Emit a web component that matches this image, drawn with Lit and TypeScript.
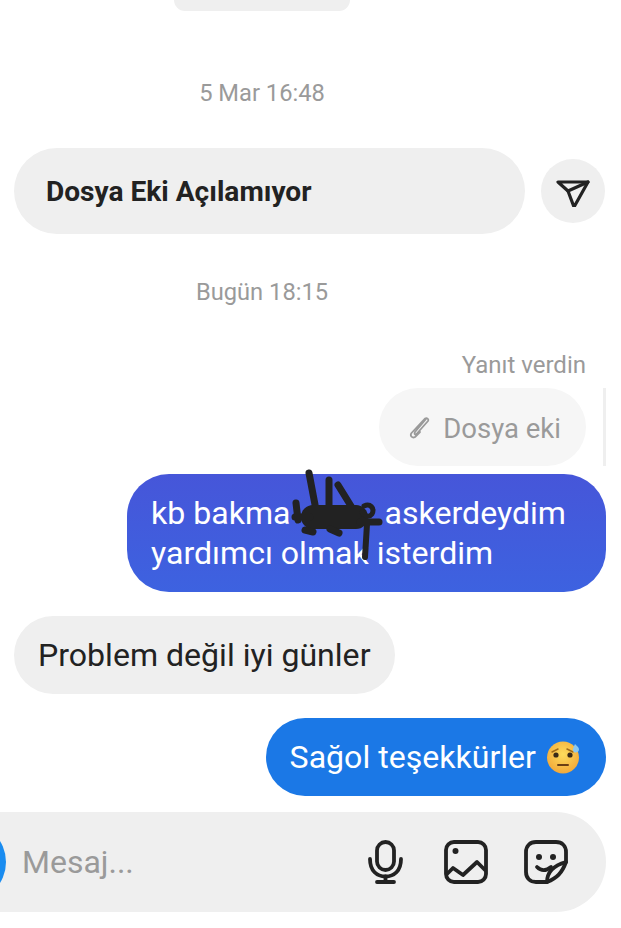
import { LitElement, html, css, svg } from "lit";
import { customElement } from "lit/decorators.js";

@customElement("app-root")
export class AppRoot extends LitElement {
  static styles = css`
    :host { display: block; width: 621px; height: 928px; overflow: hidden; background: #fff; font-family: Roboto, "Liberation Sans", sans-serif; color: #222; }
    .page { display: flex; flex-direction: column; padding: 0 15px 0 14px; }
    .top { width: 176px; height: 11px; margin-left: 160px; background: #efefef; border-radius: 0 0 16px 16px; }
    .stamp { height: 30px; line-height: 30px; text-align: center; font-size: 23.7px; color: #9a9a9a; margin-right: 96px; }
    .s1 { margin-top: 67px; }
    .s2 { margin-top: 43px; }
    .head { display: flex; align-items: center; gap: 16px; margin: 40px 1px 0 0; }
    .title { flex: 1; height: 86px; display: flex; align-items: center; padding-left: 32px; box-sizing: border-box; background: #efefef; border-radius: 43px; font-weight: 700; font-size: 28.1px; color: #222; }
    .share { width: 64px; height: 64px; border-radius: 50%; background: #efefef; display: flex; align-items: center; justify-content: center; flex: none; }
    .replied { height: 30px; line-height: 30px; margin-top: 43px; padding-right: 20px; text-align: right; font-size: 24px; color: #9a9a9a; }
    .reply { display: flex; justify-content: flex-end; align-items: stretch; gap: 17px; margin-top: 8px; height: 78px; }
    .reply-b { display: flex; align-items: center; gap: 13px; padding: 2px 25px 0 30px; box-sizing: border-box; background: #f6f6f6; border-radius: 39px; color: #9a9a9a; font-size: 27.5px; }
    .bar { width: 3px; background: #efefef; }
    .b { font-size: 32.1px; line-height: 40px; padding: 19px 24px; border-radius: 39px; box-sizing: border-box; }
    .me { align-self: flex-end; color: #fff; position: relative; }
    .indigo { margin-top: 8px; width: 479px; height: 118px; border-radius: 42px; background: linear-gradient(180deg, #4656d9 0%, #3d62e0 100%); white-space: nowrap; }
    .blue { margin-top: 24px; background: #1b78e6; height: 78px; white-space: nowrap; display: flex; align-items: center; padding: 0 26px 0 24px; }
    .gap { display: inline-block; width: 94px; }
    .them { align-self: flex-start; background: #efefef; margin-top: 24px; height: 78px; white-space: nowrap; color: #222; }
    .scrib { position: absolute; left: 0; top: 0; overflow: visible; pointer-events: none; }
    .emoji { margin-left: 10px; flex: none; }
    .input { display: flex; align-items: center; margin: 16px 0 0 -88px; height: 100px; background: #efefef; border-radius: 50px; position: relative; }
    .cam { width: 80px; height: 80px; border-radius: 50%; background: #1a8cf0; flex: none; }
    .ph { flex: 1; font-size: 32px; color: #9a9a9a; margin-left: 16px; }
    .icons { display: flex; align-items: center; gap: 36px; padding-right: 38px; }
    .icons svg { display: block; }
    .i1 { margin-right: 5px; }
  `;

  render() {
    return html`
      <div class="page">
        <div class="top"></div>
        <div class="stamp s1">5 Mar 16:48</div>
        <div class="head">
          <div class="title">Dosya Eki Açılamıyor</div>
          <div class="share">
            <svg width="36" height="32" viewBox="0 -3 36 32" fill="none" stroke="#222" stroke-width="3.2" stroke-linejoin="round" stroke-linecap="round">
              <path d="M3 4H33L19 29L13 13Z" /><path d="M13 13L33 4" />
            </svg>
          </div>
        </div>
        <div class="stamp s2">Bugün 18:15</div>
        <div class="replied">Yanıt verdin</div>
        <div class="reply">
          <div class="reply-b">
            <svg width="21" height="22" viewBox="0 0 21 22" fill="none" stroke="#9a9a9a" stroke-width="1.8" stroke-linecap="round" stroke-linejoin="round">
              <path d="M17 2L6 15C5 17 6 18 7.5 17L19 4C20 2 18 0.5 16 1.5L2.5 16C0.5 19 3.5 21.5 6 20L11 15" />
            </svg>
            <span>Dosya eki</span>
          </div>
          <div class="bar"></div>
        </div>
        <div class="b me indigo">
          kb bakma<span class="gap"></span>askerdeydim<br />yardımcı olmak isterdim
          <svg class="scrib" width="479" height="118" viewBox="127 474 479 118" fill="none" stroke="#222" stroke-linecap="round" stroke-linejoin="round">
            ${svg`
              <path stroke-width="7" d="M309 473L316 510M329 480L329 508M338 485L351 506M296 503L298 520" />
              <path stroke-width="6" d="M367 524L365 557" />
              <path stroke-width="24" d="M313 517H356" />
              <path stroke-width="7" d="M295 517H310M305 530L313 532M330 529L339 533M360 522L379 522" />
              <path stroke-width="5" d="M364 506C370 503 375 508 372 514C369 518 364 516 362 512" />
            `}
          </svg>
        </div>
        <div class="b them">Problem değil iyi günler</div>
        <div class="b me blue">
          <span>Sağol teşekkürler</span>
          <svg class="emoji" width="34" height="33" viewBox="0 0 34 33">
            <defs>
              <radialGradient id="f" cx="50%" cy="40%" r="60%"><stop offset="0%" stop-color="#fddc5c" /><stop offset="100%" stop-color="#f3a93a" /></radialGradient>
            </defs>
            <circle cx="17" cy="16.5" r="16" fill="url(#f)" />
            <path d="M6 11L12 8M21 8L27 11" stroke="#a06a1a" stroke-width="1.5" fill="none" stroke-linecap="round" />
            <circle cx="10" cy="14" r="2.6" fill="#3a2a18" />
            <circle cx="24" cy="14" r="2.6" fill="#3a2a18" />
            <path d="M12 24H22" stroke="#6b3f14" stroke-width="2" stroke-linecap="round" />
            <path d="M29 3C27 7 26 9 28 11C30 12.5 33 11 33 8.5C33 6.5 31 5 29 3Z" fill="#8cc8ee" />
          </svg>
        </div>
        <div class="input">
          <div class="cam"></div>
          <div class="ph">Mesaj...</div>
          <div class="icons">
            <svg class="i1" width="35" height="44" viewBox="0 0 35 44" fill="none" stroke="#222" stroke-width="3.8" stroke-linecap="round">
              <rect x="9" y="2" width="17" height="28" rx="8.5" />
              <path d="M2 19C2 31 9 36.500 17.500 36.500C26 36.500 33 31 33 19" />
              <path d="M17.500 36.500V42M9 42H26" />
            </svg>
            <svg width="44" height="44" viewBox="0 0 44 44" fill="none" stroke="#222" stroke-width="3.8" stroke-linejoin="round" stroke-linecap="round">
              <rect x="2" y="2" width="40" height="40" rx="8" />
              <path d="M3 34L9 28L19 35L33 22L41 30" />
              <circle cx="11.500" cy="11" r="3" fill="#222" stroke="none" />
            </svg>
            <svg width="44" height="44" viewBox="0 0 44 44" fill="none" stroke="#222" stroke-width="3.8" stroke-linejoin="round" stroke-linecap="round">
              <path d="M23 42H12C6 42 2 38 2 32V12C2 6 6 2 12 2H32C38 2 42 6 42 12V22C38 33 33 38 23 42Z" />
              <path d="M23 42C23 34 28 26 42 22" />
              <path d="M13 27C17 31 22 31 27 27" />
              <circle cx="15" cy="17" r="3" fill="#222" stroke="none" />
              <circle cx="29" cy="17" r="3" fill="#222" stroke="none" />
            </svg>
          </div>
        </div>
      </div>
    `;
  }
}
